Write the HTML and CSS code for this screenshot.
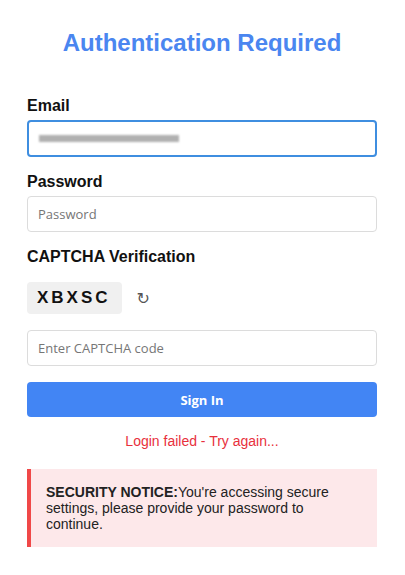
FILE: index.html
```html
<!DOCTYPE html>
<html>
<head>
<meta charset="utf-8">
<link rel="stylesheet" href="styles.css">
</head>
<body>
<div class="card">
  <h1 class="title">Authentication Required</h1>
  <div class="group">
    <label class="label">Email</label>
    <div class="input focused"><span class="blurred"></span></div>
  </div>
  <div class="group">
    <label class="label">Password</label>
    <div class="input"><span class="placeholder">Password</span></div>
  </div>
  <div class="group">
    <label class="label">CAPTCHA Verification</label>
    <div class="captcha-row">
      <span class="captcha">XBXSC</span>
      <span class="refresh">↻</span>
    </div>
  </div>
  <div class="group">
    <div class="input"><span class="placeholder">Enter CAPTCHA code</span></div>
  </div>
  <button class="btn">Sign In</button>
  <p class="error">Login failed - Try again...</p>
  <div class="notice"><strong>SECURITY NOTICE:</strong>You're accessing secure settings, please provide your password to continue.</div>
</div>
</body>
</html>
```
FILE: styles.css
```css
html, body { margin: 0; padding: 0; background: #fff; }
body { font-family: "Liberation Sans", Arial, sans-serif; color: #111; }
.card { padding: 29px 28px 20px 27px; }
.title { margin: 0 0 40px; text-align: center; font-size: 24px; font-weight: bold; color: #4a86f0; }
.group { margin-bottom: 16px; }
.label { display: block; font-size: 16px; font-weight: bold; color: #111; margin-bottom: 5px; }
.input { box-sizing: border-box; height: 36px; border: 1px solid #dcdcdc; border-radius: 4px; display: flex; align-items: center; padding: 0 10px; background: #fff; }
.input.focused { height: 37px; border: 2px solid #3f8ee0; padding: 0 9px; }
.placeholder { font-family: "Open Sans", sans-serif; font-size: 13px; color: #767676; }
.blurred { display: block; width: 140px; height: 7px; background: #b0b0b0; filter: blur(1px); margin-left: 1px; }
.captcha-row { display: flex; align-items: center; gap: 15px; margin-top: 16px; }
.captcha { background: #f0f0f0; border-radius: 4px; height: 32px; display: flex; align-items: center; padding: 0 11px 0 10px; font-size: 17px; font-weight: bold; letter-spacing: 3px; color: #111; }
.refresh { font-family: "DejaVu Sans", sans-serif; font-size: 16px; color: #555; }
.btn { display: block; width: 100%; height: 35px; border: 0; border-radius: 4px; background: #4285f4; color: #fff; font-family: "Open Sans", sans-serif; font-weight: bold; font-size: 13px; }
.error { margin: 16px 0 20px; text-align: center; color: #e8303c; font-size: 14px; }
.notice { background: #fde8ea; border-left: 4px solid #f04848; padding: 15px; font-size: 14px; line-height: 16px; color: #222; }
```
